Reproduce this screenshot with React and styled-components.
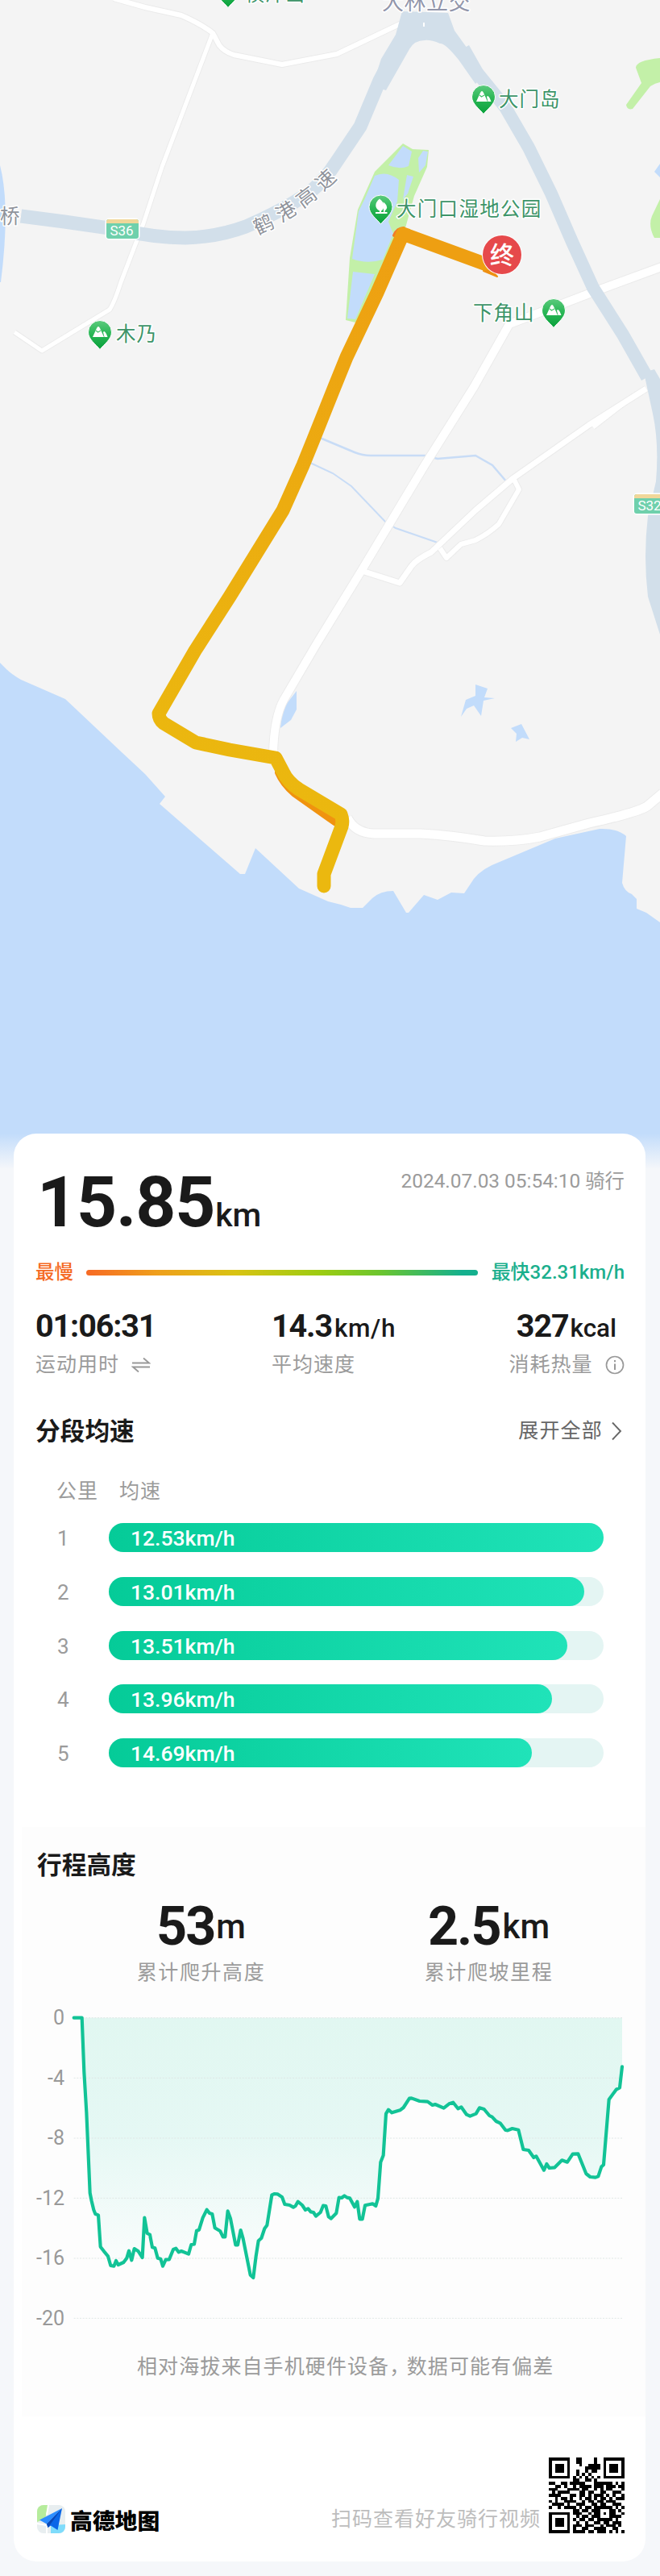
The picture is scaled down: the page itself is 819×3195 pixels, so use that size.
import React from "react";
import styled, { createGlobalStyle } from "styled-components";

const FONT = `Roboto, "Noto Sans CJK SC", "Liberation Sans", sans-serif`;

const GlobalStyle = createGlobalStyle`
  * { box-sizing: border-box; }
  body { margin: 0; background: #f5f7fa; font-family: ${FONT}; color: #1a1a1a; }
`;

const Page = styled.main`
  width: 819px;
  height: 3195px;
  overflow: hidden;
  background: #f5f7fa;
`;

const MapArea = styled.div`
  height: 1450px;
  svg { display: block; }
`;

const MapLabel = styled.text`
  font-family: ${FONT};
  font-size: ${(p) => p.$size || 24.5}px;
  letter-spacing: ${(p) => p.$gap ?? 1}px;
  fill: ${(p) => p.$color || "#3d9468"};
  stroke: #fff;
  stroke-width: 3px;
  stroke-linejoin: round;
  paint-order: stroke;
`;

const PlainLabel = styled.text`
  font-family: ${FONT};
  font-size: ${(p) => p.$size}px;
  font-weight: ${(p) => p.$weight || 400};
  fill: #fff;
  text-anchor: ${(p) => p.$anchor || "start"};
`;

const Card = styled.section`
  position: relative;
  display: flex;
  flex-direction: column;
  width: 784px;
  height: 1771px;
  margin: -44px 0 0 17px;
  padding-top: 40px;
  border-radius: 28px;
  background: #fff;
  overflow: hidden;
`;

const Row = styled.div`
  display: flex;
  justify-content: space-between;
  align-items: ${(p) => p.$align || "center"};
  margin: ${(p) => p.$top || 0}px 26px 0 27px;
`;

const Distance = styled.div`
  height: 90px;
  padding-left: 2px;
  font-size: 87.5px;
  font-weight: 700;
  line-height: 91px;
  letter-spacing: -1.2px;
  white-space: nowrap;
`;

const Unit = styled.span`
  margin-left: ${(p) => p.$left ?? 3}px;
  font-size: ${(p) => p.$size}px;
  font-weight: 500;
  letter-spacing: ${(p) => p.$gap ?? 0}px;
  position: relative;
  top: ${(p) => p.$shift || 0}px;
`;

const DateText = styled.div`
  height: 38px;
  font-size: 24.4px;
  line-height: 38px;
  color: #9b9b9b;
`;

const SpeedWord = styled.span`
  font-size: ${(p) => p.$size || 23.5}px;
  font-weight: 500;
  line-height: 31px;
  height: 30px;
  color: ${(p) => p.$color};
  white-space: nowrap;
`;

const SpeedScale = styled.div`
  width: 486px;
  height: 7px;
  border-radius: 4px;
  background: linear-gradient(90deg, #f76a24 0%, #ef9f1c 18%, #d9c313 38%, #9ccc12 60%, #6cc52e 75%, #14b08e 96%);
`;

const Stats = styled.div`
  display: grid;
  grid-template-columns: 293px 294px 144px;
  margin: 31px 26px 0 27px;
`;

const Stat = styled.div`
  display: flex;
  flex-direction: column;
  align-items: ${(p) => (p.$center ? "center" : "flex-start")};
  gap: 14px;
`;

const StatValue = styled.div`
  height: 40px;
  font-size: 39.5px;
  font-weight: 700;
  line-height: 41px;
  letter-spacing: -1.1px;
  white-space: nowrap;
`;

const Caption = styled.div`
  display: flex;
  align-items: center;
  height: 30px;
  gap: ${(p) => p.$iconGap || 15}px;
  font-size: 25px;
  line-height: 30px;
  letter-spacing: ${(p) => p.$gap ?? 1}px;
  color: ${(p) => p.$color || "#9b9b9b"};
  white-space: nowrap;
`;

const Title = styled.h2`
  height: 40px;
  margin: 0;
  font-size: 30.7px;
  font-weight: 700;
  line-height: 42px;
`;

const ColumnHeads = styled.div`
  display: flex;
  gap: 26px;
  margin: 40px 0 0 53px;
`;

const Splits = styled.div`
  display: flex;
  flex-direction: column;
  gap: 30.8px;
  margin: 24px 52px 0 54px;
`;

const SplitRow = styled.div`
  display: grid;
  grid-template-columns: 64px 614px;
  height: 36px;
`;

const SplitIndex = styled.span`
  font-size: 26px;
  line-height: 38px;
  color: #9b9b9b;
`;

const Track = styled.div`
  height: 36px;
  border-radius: 18px;
  background: #e4f5f3;
`;

const Fill = styled.div`
  height: 36px;
  padding-left: 27px;
  border-radius: 18px;
  background: linear-gradient(95deg, #05cb98, #20e3b9);
  color: #fff;
  font-size: 26.5px;
  font-weight: 500;
  line-height: 38px;
`;

const Elevation = styled.div`
  height: 731px;
  margin: 74px 0 0 10px;
  padding-top: 27px;
  background: #fdfdfd;
`;

const ElevationTitle = styled(Title)`
  margin-left: 19px;
`;

const Climbs = styled.div`
  display: grid;
  grid-template-columns: 357px 357px;
  margin: 26px 0 0 44px;
`;

const Climb = styled.div`
  display: flex;
  flex-direction: column;
  align-items: center;
  gap: 13px;
`;

const ClimbValue = styled.div`
  height: 60px;
  font-size: 66.5px;
  font-weight: 700;
  line-height: 61px;
  letter-spacing: -2px;
`;

const ChartBox = styled.div`
  display: flex;
  gap: 5px;
  margin: 28px 0 0 15px;
  height: 400px;
`;

const Axis = styled.div`
  display: flex;
  flex-direction: column;
  justify-content: space-between;
  width: 38px;
  height: 398.5px;
  font-size: 25px;
  line-height: 26px;
  text-align: right;
  color: #999;
`;

const Note = styled.p`
  height: 30px;
  margin: 31px 0 0 143px;
  font-size: 25px;
  line-height: 30px;
  letter-spacing: 1.1px;
  color: #9b9b9b;
  white-space: nowrap;
`;

const Comma = styled.span`
  letter-spacing: -3.5px;
`;

const Footer = styled.footer`
  display: flex;
  align-items: flex-end;
  margin: 51px 26px 0 29px;
`;

const Brand = styled.div`
  display: flex;
  align-items: center;
  gap: 6px;
  height: 35px;
  font-size: 27.8px;
  font-weight: 900;
  color: #000;
`;

const ScanText = styled.div`
  margin: 0 10px 0 auto;
  font-size: 25px;
  line-height: 34px;
  letter-spacing: 1px;
  color: #bdbdbd;
`;

function Pin({ x, y, tree }) {
  return (
    <g transform={`translate(${x} ${y})`}>
      <path d="M0 21.5C-5 15-14.5 9-14.5 0A14.5 14.5 0 0 1 14.5 0C14.5 9 5 15 0 21.5Z" fill="url(#pin)" stroke="#fff" strokeWidth="1" />
      {tree ? (
        <g fill="#fff">
          <path d="M-1.500-10C5-5 6 2 0 5.500C-8 3-8-5-1.500-10Z" />
          <path d="M3-6C9-2 9 4 3.500 5.500Z" />
          <path d="M-6.500 6.500H8V8.500H-6.500ZM-1.500 4H0.500V8H-1.500ZM3.500 4H5V8H3.500Z" />
        </g>
      ) : (
        <g>
          <path d="M-9 6L-4-5Q-2-9 0-5L5 6Z" fill="#fff" />
          <path d="M5.500 6L4 0L5-1Q7-1 9.500 6Z" fill="#fff" />
          <path d="M-5-2L-2.500 0L1-2" fill="none" stroke="#43c26b" strokeWidth="1.300" />
        </g>
      )}
    </g>
  );
}

function RoadBadge({ x, y, label }) {
  return (
    <g transform={`translate(${x} ${y})`}>
      <rect x="-1.500" y="-1.500" width="43" height="27" rx="5" fill="#fff" />
      <rect width="40" height="24" rx="3" fill="#6fd0ac" />
      <path d="M0 5V3Q0 0 3 0H37Q40 0 40 3V5Z" fill="#f0d79a" />
      <PlainLabel x="19" y="20" $size={17} $anchor="middle">{label}</PlainLabel>
    </g>
  );
}

const ROADS = [
  ["M141 -2L180 9L225 19Q250 30 264 41L272 56Q278 64 290 68L350 80L418 67L498 29", 6],
  ["M264 41L201 207L178 277L150 350Q142 375 136 384L52 435L18 412", 5],
  ["M821 331L742 360L632 402L588 480L527 577L449 707L392 800L352 868Q340 890 339 935", 10],
  ["M802 482L731 527L637 593L590 633L535 685Q515 695 510 703L496 723L452 709", 7],
  ["M637 593L644 607L619 650Q606 662 590 670L572 675L554 692L546 680", 6],
  ["M736 530L785 492", 5],
  ["M431 1014Q440 1033 464 1034H522Q560 1036 601 1043Q640 1044 670 1038L731 1021Q790 1008 803 1000L822 984", 11],
];

function RideMap() {
  return (
    <svg width="819" height="1450" viewBox="0 0 819 1450">
      <defs>
        <linearGradient id="pin" x1="0" y1="0" x2="0" y2="1">
          <stop offset="0" stopColor="#5ccb7d" />
          <stop offset=".45" stopColor="#2bb757" />
          <stop offset="1" stopColor="#08a03a" />
        </linearGradient>
        <linearGradient id="route" gradientUnits="userSpaceOnUse" x1="600" y1="330" x2="350" y2="1000">
          <stop offset="0" stopColor="#ee9f12" />
          <stop offset=".5" stopColor="#ecac10" />
          <stop offset="1" stopColor="#ebb80f" />
        </linearGradient>
        <linearGradient id="fade" x1="0" y1="0" x2="0" y2="1">
          <stop offset="0" stopColor="#f5f7fa" stopOpacity="0" />
          <stop offset="1" stopColor="#f5f7fa" />
        </linearGradient>
      </defs>
      <rect width="819" height="1450" fill="#f4f4f4" />
      <path
        d="M0 822L8 830Q14 836 26 843L81 867L151 933L180 960L205 988L198 997L298 1084H304L317 1052L371 1102L407 1118L423 1122L435 1126H450L462 1114Q472 1105 488 1105L504 1132H507L526 1110L543 1116L560 1107L576 1108L588 1090Q598 1077 620 1069L689 1040L744 1028Q765 1027 777 1037L772 1095Q775 1106 784 1109L790 1115V1127L802 1132L819 1144V1450H0Z"
        fill="#c2dcfb"
      />
      <path d="M0 205Q13 255 1 350H0Z" fill="#c2dcfb" />
      <path d="M819 72Q789 75 789 84L796 103L777 130Q778 137 785 135L807 107Q813 103 819 102ZM819 247L809 268Q804 280 812 295H819Z" fill="#c3f0a8" />
      <path d="M819 203L812 213L819 220Z" fill="#c2dcfb" />

      <path d="M500 178L512 185L532 186L530 207L514 243L501 290L441 400L429 397L434 320L444 260L465 213Z" fill="#c3f0a8" />
      <path d="M500 181L511 188L507 206Q496 211 482 205ZM525 187L531 188L528 205L520 214L519 196ZM465 218Q480 211 495 223L493 250L482 275L488 290L475 322Q455 328 437 321L445 262L452 248ZM505 217L513 219L506 240L500 247ZM438 337L465 340L441 396L431 395Z" fill="#c2dcfb" />

      <g fill="none" stroke="#c8dcf6" strokeWidth="2.500">
        <path d="M397 543L440 561Q450 565 460 565H527L543 569L590 565L611 577L629 598" />
        <path d="M385 574L413 587L436 603L478 647L491 655L543 673" strokeWidth="2" />
      </g>
      <g fill="#c2dcfb">
        <path d="M590 849L605 854L601 865L614 866L600 869L597 888L588 875L579 879L572 889L578 868L590 863Z" />
        <path d="M634 903L647 898L657 917L648 915L640 920L641 910Z" />
        <path d="M368 857V880L361 893L348 903L350 880Z" />
      </g>

      {ROADS.map(([d, w]) => (
        <path key={d} d={d} fill="none" stroke="#ebebeb" strokeWidth={w + 2} strokeLinejoin="round" />
      ))}
      {ROADS.map(([d, w]) => (
        <path key={d} d={d} fill="none" stroke="#fff" strokeWidth={w} strokeLinejoin="round" />
      ))}

      <g fill="none" stroke="#d2dfea" strokeWidth="17">
        <path d="M26 268L80 275L150 285Q192 295 230 295Q270 294 305 281Q350 262 385 238Q405 221 416 203L447 157L471 100L503 40" />
        <path d="M575 60L592 90L627 133L656 183L684 240L710 300L736 357L773 415L803 468" strokeWidth="16" />
      </g>
      <path d="M499 14L556 16L564 38L603 92L590 104L569 74Q552 53 546 54Q534 49 527 50Q514 50 508 61L479 112L462 107L473 73L491 43Z" fill="#d2dfea" />
      <path d="M799 462L812 458L819 470V787L804 740Q798 690 804 640L814 597Q818 550 810 513Z" fill="#d2dfea" />
      <path d="M526 28V33" stroke="#fff" strokeWidth="2" />

      <g fill="none" strokeLinejoin="round" strokeLinecap="round">
        <path d="M617 343L600 336L601 325Z" fill="#ee8f12" stroke="#ee8f12" strokeWidth="2" />
        <path d="M489 292Q493 283 501 283" stroke="#f27b2a" strokeWidth="4" />
        <path d="M346 958Q352 972 366 984L417 1020" stroke="#f0930f" strokeWidth="10" />
        <path d="M601 327L500 290L468 363L430 443L415 480L389 545L376 577L351 633L285 740L242 807L197 885Q197 892 203 897L243 921L285 930L342 940L351 957Q357 970 371 979L423 1010Q426 1018 424 1025L402 1084V1099" stroke="url(#route)" strokeWidth="17" />
      </g>

      <circle cx="623" cy="316" r="25" fill="#fff" />
      <circle cx="623" cy="316" r="24" fill="#e6494b" />
      <PlainLabel x="623" y="327" $size={30} $weight={500} $anchor="middle">终</PlainLabel>

      <Pin x={283} y={-12} />
      <Pin x={600} y={120} />
      <Pin x={472.500} y={256.500} tree />
      <Pin x={687} y={385} />
      <Pin x={124} y={412} />
      <MapLabel x="304" y="1" $size={24}>横洋山</MapLabel>
      <MapLabel x="619" y="131.500">大门岛</MapLabel>
      <MapLabel x="492" y="267.500" $gap={1.300}>大门口湿地公园</MapLabel>
      <MapLabel x="587" y="396.500">下角山</MapLabel>
      <MapLabel x="144" y="423">木乃</MapLabel>
      <MapLabel x="474" y="11.500" $size={27} $gap={0.500} $color="#9296ab">大林立交</MapLabel>
      <MapLabel x="0" y="277" $color="#8f939b">桥</MapLabel>
      {[
        ["鹤", 327, 278, -25],
        ["港", 355, 262, -32],
        ["高", 380, 244, -37],
        ["速", 404, 223, -43],
      ].map(([ch, x, y, a]) => (
        <MapLabel key={ch} x="-12.500" y="9" $gap={0} $color="#8f939b" transform={`translate(${x} ${y}) rotate(${a})`}>{ch}</MapLabel>
      ))}
      <RoadBadge x={132} y={272} label="S36" />
      <RoadBadge x={787} y={613} label="S32" />
      <rect y="1406" width="819" height="44" fill="url(#fade)" />
    </svg>
  );
}

const SPLITS = [
  ["12.53km/h", 614],
  ["13.01km/h", 590],
  ["13.51km/h", 569],
  ["13.96km/h", 550],
  ["14.69km/h", 524.5],
];

const ALTITUDE_START =
  "275,128 305,128 313,330 322,480 335,780 341,810 349,843 355,858 366,862 374,980 387,997 402,1015 412,1050 424,1052 432,1032 440,1047 460,1038 472,1022 480,995 490,1030 500,987 515,997 530,1020 538,872 548,930 558,935 567,982 577,985 587,1022 598,1025 606,1052 617,1028 630,1027 645,990 655,986 665,1000 675,996 702,1007 712,972 723,970 732,920 741,917 755,872 770,842 780,855 790,858 800,910 820,922 830,943 838,943 848,847 858,875 877,973 885,973 896,918 905,950 932,1085 943,1095 953,1015 962,958 973,948 985,912 994,900 1012,787 1022,783 1033,784 1050,795 1060,822 1078,825 1092,833 1100,828 1109,812 1125,825 1137,843 1147,838 1157,850 1167,852 1176,866 1193,852 1203,827 1213,828 1223,868 1232,875";
const ALTITUDE_END =
  "1252,855 1262,797 1272,798 1282,790 1292,797 1302,799 1320,832 1330,812 1339,877 1349,877 1359,826 1377,822 1387,820 1399,828 1407,800 1417,665 1427,640 1437,485 1446,470 1459,481 1489,472 1502,462 1524,428 1532,427 1562,438 1592,440 1610,453 1620,450 1652,464 1672,448 1687,443 1705,466 1717,460 1737,488 1750,494 1772,485 1785,463 1802,468 1822,492 1832,497 1847,513 1862,520 1882,546 1890,547 1907,540 1930,545 1948,618 1968,621 1987,648 1996,643 2025,695 2035,672 2045,687 2065,685 2092,658 2112,665 2132,635 2152,634 2182,708 2197,720 2217,722 2227,718 2239,682 2247,675 2267,432 2294,395 2307,388 2316,310";
const ALTITUDE = `${ALTITUDE_START} ${ALTITUDE_END}`;

function AltitudeChart() {
  return (
    <svg width="690" height="400" viewBox="255 90 2070 1200">
      <defs>
        <linearGradient id="area" gradientUnits="userSpaceOnUse" x1="0" y1="128" x2="0" y2="1095">
          <stop offset="0" stopColor="#e1f7f1" />
          <stop offset=".45" stopColor="#e5f8f4" />
          <stop offset="1" stopColor="#fcfdfd" />
        </linearGradient>
      </defs>
      <polygon points={`${ALTITUDE} 2316,128`} fill="url(#area)" />
      {[128, 352, 576, 799, 1023, 1246].map((y) => (
        <path key={y} d={`M275 ${y}H2316`} stroke="#dfe7e5" strokeWidth="3" strokeDasharray="6 5" />
      ))}
      <polyline points={ALTITUDE} fill="none" stroke="#12c396" strokeWidth="12.500" strokeLinejoin="round" strokeLinecap="round" />
    </svg>
  );
}

const QR_ROWS = [
  "1111111001100001010111111",
  "1000001001100001010000001",
  "1011101000100111100011101",
  "1011101000001111110011101",
  "1011101001001011010011101",
  "1000001001010100010000001",
  "1111111010101010101111111",
  "0000000011001101000000000",
  "1100110111110001111110101",
  "0011010010111101110111011",
  "1110001111011001010110001",
  "0101111000110110011001110",
  "1111000110110101110101001",
  "0010110100101101011010111",
  "1010011110010110110111000",
  "0111101001110011011001110",
  "1001011110101101111110101",
  "0000000011011011100011010",
  "1111111011100101101011001",
  "1000001001011011100011110",
  "1011101010110110111110100",
  "1011101001001001101101110",
  "1011101011101110010111010",
  "1000001010011001111001100",
  "1111111011110110111010101",
];

function QrCode() {
  const cells = QR_ROWS.flatMap((row, y) =>
    [...row].map((c, x) => {
      const inTopRight = x >= 18 && y < 7;
      const ring = x === 18 || x === 24 || y === 0 || y === 6;
      const core = x >= 20 && x <= 22 && y >= 2 && y <= 4;
      const on = inTopRight ? ring || core : x === 17 && y < 8 ? false : c === "1";
      return on ? `M${x} ${y}h1v1h-1z` : "";
    })
  );
  return (
    <svg width="94" height="94" viewBox="0 0 25 25" shapeRendering="crispEdges">
      <path d={cells.join("")} fill="#000" />
    </svg>
  );
}

function BrandIcon() {
  return (
    <svg width="35" height="35" viewBox="0 0 35 35">
      <clipPath id="tile"><rect width="35" height="35" rx="8" /></clipPath>
      <g clipPath="url(#tile)">
        <rect width="35" height="35" fill="#e8eef0" />
        <path d="M0 0H14L10 17L0 21Z" fill="#b6ec9c" />
        <path d="M17 25L35 24V35H17Z" fill="#7fdcfb" />
        <path d="M14 0L12 12" stroke="#fff" strokeWidth="2" />
        <path d="M0 23L12 25V35" fill="none" stroke="#fff" strokeWidth="2" />
      </g>
      <path d="M31 4L3 18.500L12 23.500Z" fill="#2c8dff" />
      <path d="M31 4L12 23.500L13.500 28L17 25.500L25.500 31Z" fill="#0a67e8" />
      <path d="M31 4L12 23.500L13.500 28Z" fill="#0949b8" />
    </svg>
  );
}

export default function App() {
  return (
    <Page>
      <GlobalStyle />
      <MapArea><RideMap /></MapArea>
      <Card>
        <Row $align="flex-start">
          <Distance>15.85<Unit $size={41} $left={1}>km</Unit></Distance>
          <DateText>2024.07.03 05:54:10 骑行</DateText>
        </Row>
        <Row $top={27}>
          <SpeedWord $color="#f56a24">最慢</SpeedWord>
          <SpeedScale />
          <SpeedWord $color="#1aaf8d" $size={24}>最快32.31km/h</SpeedWord>
        </Row>
        <Stats>
          <Stat>
            <StatValue>01:06:31</StatValue>
            <Caption>
              运动用时
              <svg width="24" height="20" viewBox="0 0 24 20" fill="none" stroke="#999" strokeWidth="1.800">
                <path d="M1 7.500H22L15 1.500M23 12.500H2L9 18.500" />
              </svg>
            </Caption>
          </Stat>
          <Stat>
            <StatValue>14.3<Unit $size={31.5} $gap={0.6}>km/h</Unit></StatValue>
            <Caption>平均速度</Caption>
          </Stat>
          <Stat $center>
            <StatValue>327<Unit $size={31.5} $left={2}>kcal</Unit></StatValue>
            <Caption>
              消耗热量
              <svg width="24" height="24" viewBox="0 0 24 24" fill="none" stroke="#999" strokeWidth="1.700">
                <circle cx="12" cy="12" r="10.500" />
                <path d="M12 10.500V18M12 6V8.300" strokeWidth="2" />
              </svg>
            </Caption>
          </Stat>
        </Stats>
        <Row $top={47}>
          <Title>分段均速</Title>
          <Caption $color="#666" $iconGap={10} $gap={1.2}>
            展开全部
            <svg width="17" height="24" viewBox="0 0 17 24" fill="none" stroke="#666" strokeWidth="1.900">
              <path d="M2 1.500L12 12L2 22.500" />
            </svg>
          </Caption>
        </Row>
        <ColumnHeads>
          <Caption>公里</Caption>
          <Caption>均速</Caption>
        </ColumnHeads>
        <Splits>
          {SPLITS.map(([speed, width], i) => (
            <SplitRow key={speed}>
              <SplitIndex>{i + 1}</SplitIndex>
              <Track><Fill style={{ width }}>{speed}</Fill></Track>
            </SplitRow>
          ))}
        </Splits>
        <Elevation>
          <ElevationTitle>行程高度</ElevationTitle>
          <Climbs>
            <Climb>
              <ClimbValue>53<Unit $size={42} $left={2} $shift={-8}>m</Unit></ClimbValue>
              <Caption $gap={1.6}>累计爬升高度</Caption>
            </Climb>
            <Climb>
              <ClimbValue>2.5<Unit $size={42} $shift={-8}>km</Unit></ClimbValue>
              <Caption $gap={1.6}>累计爬坡里程</Caption>
            </Climb>
          </Climbs>
          <ChartBox>
            <Axis>
              {[0, -4, -8, -12, -16, -20].map((v) => <span key={v}>{v}</span>)}
            </Axis>
            <AltitudeChart />
          </ChartBox>
          <Note>相对海拔来自手机硬件设备<Comma>，</Comma>数据可能有偏差</Note>
        </Elevation>
        <Footer>
          <Brand><BrandIcon />高德地图</Brand>
          <ScanText>扫码查看好友骑行视频</ScanText>
          <QrCode />
        </Footer>
      </Card>
    </Page>
  );
}
